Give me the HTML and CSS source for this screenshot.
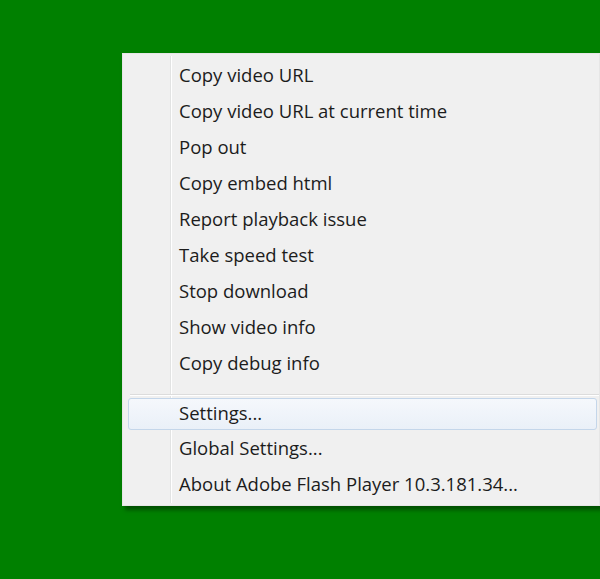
FILE: index.html
```html
<!DOCTYPE html>
<html>
<head>
<meta charset="utf-8">
<link rel="stylesheet" href="styles.css">
</head>
<body>
<div class="menu">
  <div class="gutter"></div>
  <ul class="items">
    <li class="item">Copy video URL</li>
    <li class="item">Copy video URL at current time</li>
    <li class="item">Pop out</li>
    <li class="item">Copy embed html</li>
    <li class="item">Report playback issue</li>
    <li class="item">Take speed test</li>
    <li class="item">Stop download</li>
    <li class="item">Show video info</li>
    <li class="item">Copy debug info</li>
    <li class="sep"></li>
    <li class="item hover">Settings...</li>
    <li class="item">Global Settings...</li>
    <li class="item">About Adobe Flash Player 10.3.181.34...</li>
  </ul>
</div>
</body>
</html>
```
FILE: styles.css
```css
html, body {
  margin: 0;
  padding: 0;
  width: 600px;
  height: 579px;
  overflow: hidden;
  background: #008000;
}
.menu {
  position: relative;
  margin: 53px 0 0 122px;
  width: 478px;
  height: 453px;
  background: #f0f0f0;
  border: 1px solid #e6e6e6;
  box-sizing: border-box;
  box-shadow: 3px 4px 4px rgba(0, 40, 0, 0.55);
  font-family: "Open Sans", "Noto Sans", sans-serif;
  font-size: 18.5px;
  color: #1c1c1c;
}
.gutter {
  position: absolute;
  left: 47px;
  top: 2px;
  bottom: 2px;
  width: 1px;
  background: #e2e3e3;
  border-right: 1px solid #ffffff;
}
.items {
  list-style: none;
  margin: 0;
  padding: 3px 0 0 0;
  display: flex;
  flex-direction: column;
}
.item {
  height: 36px;
  line-height: 36px;
  padding-left: 56px;
  position: relative;
  white-space: nowrap;
}
.sep {
  height: 17px;
  position: relative;
  margin-left: 7px;
}
.sep::after {
  content: "";
  position: absolute;
  left: 0;
  right: 0;
  top: 13px;
  height: 1px;
  background: #dcdcdc;
  border-bottom: 1px solid #ffffff;
}
.item.hover {
  margin-left: 5px;
  margin-right: 2px;
  padding-left: 50px;
  height: 30px;
  line-height: 27px;
  border: 1px solid #c4d6ea;
  border-radius: 3px;
  background: linear-gradient(#f5f8fc, #eaf0f8);
  z-index: 1;
}
```
